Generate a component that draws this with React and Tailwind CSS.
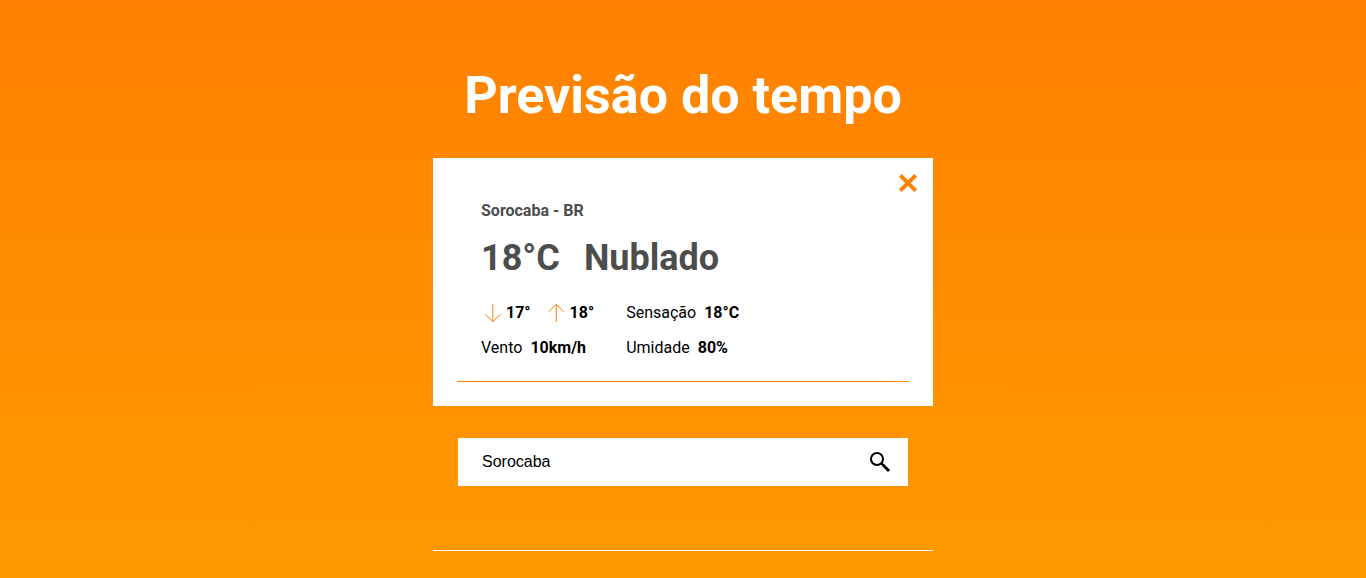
import { useState } from "react";

function Arrow({ up = false }) {
  return (
    <svg
      viewBox="0 0 24 24"
      className="h-6 w-6 shrink-0"
      fill="none"
      stroke="#ff8000"
      strokeWidth="1"
      aria-hidden="true"
    >
      {up ? (
        <path d="M11.3 21V3.5M3.5 10.8L11.3 3.4L19.1 10.8" />
      ) : (
        <path d="M11.8 3V20.5M4 13.2L11.8 20.6L19.6 13.2" />
      )}
    </svg>
  );
}

function Detail({ label, value }) {
  return (
    <p className="flex gap-2">
      <span>{label}</span>
      <span className="font-bold">{value}</span>
    </p>
  );
}

function WeatherCard({ onClose }) {
  return (
    <section className="relative w-full bg-white p-6">
      <button
        type="button"
        aria-label="Fechar"
        onClick={onClose}
        className="absolute top-3 right-3 h-[26px] w-[26px]"
      >
        <svg viewBox="0 0 26 26" className="h-full w-full" aria-hidden="true">
          <path
            d="M5.3 5.3L20.7 20.7M20.7 5.3L5.3 20.7"
            stroke="#ff8000"
            strokeWidth="4"
            fill="none"
          />
        </svg>
      </button>
      <div className="border-b border-[#ff8000] px-6 pt-[17px] pb-[21px]">
        <h2 className="font-bold text-[#4d4d4d]">Sorocaba - BR</h2>
        <p className="mt-[15px] flex gap-6 text-4xl font-bold text-[#4d4d4d]">
          <span>18°C</span>
          <span>Nublado</span>
        </p>
        <div className="mt-[23px] grid grid-cols-[max-content_max-content] items-center gap-x-8 gap-y-[11px]">
          <div className="flex gap-[14px]">
            <span className="flex items-center gap-px font-bold">
              <Arrow />
              17°
            </span>
            <span className="flex items-center gap-px font-bold">
              <Arrow up />
              18°
            </span>
          </div>
          <Detail label="Sensação" value="18°C" />
          <Detail label="Vento" value="10km/h" />
          <Detail label="Umidade" value="80%" />
        </div>
      </div>
    </section>
  );
}

export default function App() {
  const [city, setCity] = useState("Sorocaba");
  const [open, setOpen] = useState(true);

  return (
    <main className="min-h-screen bg-linear-to-b from-[#ff8000] to-[#ff9900] px-4 pt-16 font-['Roboto',sans-serif] text-base text-black">
      <div className="mx-auto flex max-w-[500px] flex-col items-center">
        <h1 className="mb-[30px] text-center text-[52px] leading-[64px] font-bold text-white">
          Previsão do tempo
        </h1>
        {open && <WeatherCard onClose={() => setOpen(false)} />}
        <form
          onSubmit={(event) => {
            event.preventDefault();
            setOpen(true);
          }}
          className="mt-8 flex h-12 w-full max-w-[450px] items-center bg-white pr-4 pl-6"
        >
          <input
            type="text"
            aria-label="Cidade"
            value={city}
            onChange={(event) => setCity(event.target.value)}
            className="h-full min-w-0 flex-1 font-['Liberation_Sans',Arial,sans-serif] outline-none"
          />
          <button type="submit" aria-label="Buscar" className="h-6 w-6">
            <svg viewBox="0 0 24 24" className="h-6 w-6" fill="none" stroke="black" aria-hidden="true">
              <circle cx="9" cy="9" r="6" strokeWidth="2" />
              <path d="M13.2 13.2L15.2 15.2" strokeWidth="2" />
              <path d="M14.8 14.8L21 21" strokeWidth="3" />
            </svg>
          </button>
        </form>
        <hr className="mt-16 w-full border-white" />
      </div>
    </main>
  );
}
